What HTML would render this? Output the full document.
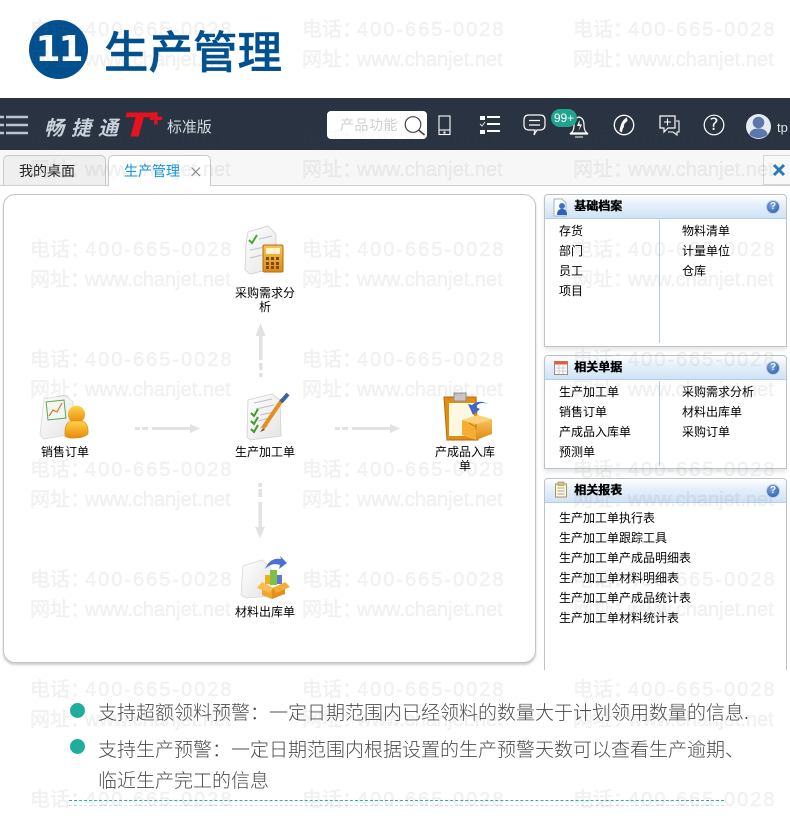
<!DOCTYPE html>
<html lang="zh"><head><meta charset="utf-8"><title>生产管理</title>
<style>
html,body{margin:0;padding:0}
body{width:790px;height:820px;overflow:hidden;background:#fff;position:relative;font-family:"Liberation Sans","WenQuanYi Zen Hei","Noto Sans CJK SC",sans-serif}
.a{position:absolute}
.t{position:absolute;font-size:12px;line-height:20px;color:#000;white-space:nowrap;font-family:"WenQuanYi Zen Hei","Noto Sans CJK SC",sans-serif}
.c{position:absolute;width:64px;text-align:center;font-size:12px;line-height:14px;color:#000;font-family:"WenQuanYi Zen Hei","Noto Sans CJK SC",sans-serif}
.panel{position:absolute;left:544px;width:243px;box-sizing:border-box;border:1px solid #bcc3c8;border-radius:4px 4px 0 0;background:#fff;box-shadow:0 3px 5px rgba(0,0,0,.1)}
.ph{position:absolute;left:0;top:0;right:0;height:23px;background:linear-gradient(#fff 0,#e9f2fb 35%,#cfe2f5 100%);border-bottom:1px solid #b5cfe8;border-radius:4px 4px 0 0}
.ph b{position:absolute;left:29px;top:2px;font-size:12px;line-height:17px;color:#000;text-shadow:.5px 0 #000;font-family:"WenQuanYi Zen Hei","Noto Sans CJK SC",sans-serif}
.q{position:absolute;right:6px;top:5px;width:12px;height:12px;border:1px solid #bcd0ea;border-radius:50%;background:radial-gradient(circle at 40% 35%,#7ea6e0,#1f55aa);color:#fff;font-size:10px;line-height:12px;text-align:center;font-weight:bold}
.dv{position:absolute;left:114px;width:1px;background:#b3cde0}
.w{position:absolute;font-size:20px;line-height:24px;letter-spacing:0;color:rgba(120,120,120,.085);-webkit-text-stroke:.4px rgba(120,120,120,.085);white-space:nowrap;font-family:"Liberation Sans","Noto Sans CJK SC",sans-serif;z-index:50}
.w i{display:inline-block;width:55px;font-style:normal;letter-spacing:0}
.p{letter-spacing:2px}
.d{color:rgba(120,120,120,.045);-webkit-text-stroke:0}
.b{position:absolute;left:98px;font-size:19px;line-height:24px;letter-spacing:0;color:#4c4c4c;white-space:nowrap;font-weight:300;font-family:"Noto Sans CJK SC",sans-serif}
.dot{position:absolute;left:70px;width:15px;height:15px;border-radius:50%;background:#1fae9c}
</style></head><body>

<!-- Title -->
<div class="a" style="left:29px;top:20px;width:59px;height:59px;border-radius:50%;background:#00508f"></div>
<div class="a" style="left:29px;top:20px;width:59px;text-align:center;color:#fff;font-weight:bold;font-size:36px;line-height:59px;letter-spacing:-2px;font-family:'DejaVu Sans',sans-serif">11</div>
<div class="a" style="left:104px;top:20px;font-size:44.5px;line-height:58px;font-weight:500;color:#00508f;-webkit-text-stroke:.4px #00508f;white-space:nowrap;font-family:'Noto Sans CJK SC',sans-serif">生产管理</div>

<!-- Top bar -->
<div class="a" style="left:0;top:98px;width:790px;height:52px;background:#293341"></div>
<svg class="a" style="left:0;top:98px" width="790" height="52" fill="none">
 <g stroke="#b9c4d6" stroke-width="2.500"><path d="M0 19H4M6 19H28M0 27H4M6 27H28M0 35H4M6 35H28"/></g>
 <g stroke="#fff" stroke-width="1.100"><rect x="439" y="18" width="11" height="18.500"/><path d="M439 32H450"/></g><rect x="443.500" y="33.500" width="2" height="2" fill="#fff"/>
 <g fill="#fff"><rect x="480" y="18" width="5" height="4"/><rect x="480" y="32" width="5" height="4"/><rect x="487" y="18" width="13" height="2"/><rect x="487" y="25" width="13" height="2"/><rect x="487" y="32" width="13" height="2"/></g>
 <path d="M480 26L482 28L485 24" stroke="#dfe5ea" stroke-width="1"/>
 <path d="M529 17H540Q545 17 545 22V27Q545 32 540 32H537L534 37L535 32H529Q524 32 524 27V22Q524 17 529 17Z" stroke="#fff" stroke-width="1.200"/><path d="M529 22.500H540M529 27H540" stroke="#fff" stroke-width="1.200"/>
 <path d="M571 35Q574 33 574 27Q574 20 579 19Q584 20 584 27Q584 33 587 35Z" stroke="#fff" stroke-width="1.200"/><path d="M570 36H588" stroke="#fff" stroke-width="1.200"/><path d="M579.500 22L577 28H580L578.500 33L582 26.500H579.500Z" fill="#fff"/><path d="M575 39H583" stroke="#fff" stroke-width="1"/>
 <circle cx="624" cy="27" r="9.700" stroke="#fff" stroke-width="1.300"/><path d="M627 19.500Q621 22 619.500 33L622 34.500Q622.500 30 624 29Q623 26 627.500 23Z" fill="#fff"/>
 <path d="M660 18H675V30H668L664 34V30H660Z" stroke="#fff" stroke-width="1.200"/><path d="M664 24H671M667.500 20.500V27.500" stroke="#fff" stroke-width="1.100"/><path d="M676 23H679V34H677V37L673 34H668" stroke="#fff" stroke-width="1.100"/>
 <circle cx="714" cy="27" r="9.800" stroke="#fff" stroke-width="1.200"/>
 <circle cx="758.500" cy="28.500" r="12.500" fill="#e6ebf3"/><circle cx="758.500" cy="24.500" r="5.800" fill="#5d77ad"/><path d="M749.500 37Q750 30.500 758.500 30.500Q767 30.500 767.500 37Q758.500 43 749.500 37Z" fill="#5d77ad"/>
</svg>
<div class="a" style="left:44px;top:115px;font-size:20px;line-height:24px;font-weight:bold;font-style:italic;color:#c9d2dc;letter-spacing:7px;white-space:nowrap;font-family:'Noto Sans CJK SC',sans-serif">畅捷通</div>
<div class="a" style="left:123px;top:110px;font-size:33px;line-height:30px;font-weight:bold;font-style:italic;color:#e6121f;transform:scaleX(1.4);transform-origin:left top;-webkit-text-stroke:1px #e6121f;font-family:'Liberation Sans',sans-serif">T</div>
<div class="a" style="left:149px;top:107px;font-size:22px;line-height:24px;font-weight:bold;font-style:italic;color:#e6121f;-webkit-text-stroke:1px #e6121f;font-family:'Liberation Sans',sans-serif">+</div>
<div class="a" style="left:167px;top:117px;font-size:15px;line-height:20px;color:#d4dbe3;white-space:nowrap;font-family:'WenQuanYi Zen Hei','Noto Sans CJK SC',sans-serif;letter-spacing:-.1px">标准版</div>
<div class="a" style="left:327px;top:111px;width:100px;height:28px;border-radius:4px;background:#fff"></div>
<div class="a" style="left:340px;top:115px;font-size:14px;line-height:20px;color:#cfcfcf;letter-spacing:.5px;white-space:nowrap;font-family:'WenQuanYi Zen Hei','Noto Sans CJK SC',sans-serif">产品功能</div>
<svg class="a" style="left:400px;top:111px" width="28" height="28" fill="none"><circle cx="13" cy="13.500" r="7.800" stroke="#444" stroke-width="1.200"/><path d="M18.500 19L24.500 24" stroke="#444" stroke-width="1.600"/></svg>
<div class="a" style="left:551px;top:109px;width:26px;height:18px;border-radius:10px;background:#1fa58f;color:#fff;text-align:center;font-size:12px;line-height:18px;white-space:nowrap">99+</div>
<div class="a" style="left:704px;top:114px;width:20px;text-align:center;color:#fff;font-size:17px;line-height:22px;font-family:'DejaVu Sans',sans-serif">?</div>
<div class="a" style="left:777px;top:120px;color:#dfe5ea;font-size:13px;line-height:16px">tp</div>

<!-- Tab bar -->
<div class="a" style="left:0;top:150px;width:790px;height:35px;background:#f7f7f7;border-bottom:1px solid #cfcfcf"></div>
<div class="a" style="left:3px;top:155px;width:103px;height:30px;box-sizing:border-box;background:#efefef;border:1px solid #c9c9c9;border-bottom:0;border-radius:5px 5px 0 0"></div>
<div class="a" style="left:108px;top:155px;width:103px;height:31px;box-sizing:border-box;background:#fff;border:1px solid #c9c9c9;border-bottom:0;border-radius:5px 5px 0 0"></div>
<div class="t" style="left:19px;top:161px;color:#222;font-size:14px;letter-spacing:0">我的桌面</div>
<div class="t" style="left:124px;top:161px;color:#1296db;font-size:14px;letter-spacing:0">生产管理</div>
<svg class="a" style="left:190px;top:166px" width="12" height="12"><path d="M1.500 1.500L10 10M10 1.500L1.500 10" stroke="#8a8a8a" stroke-width="1.200"/></svg>
<div class="a" style="left:763px;top:155px;width:27px;height:30px;box-sizing:border-box;background:#f8f8f8;border:1px solid #d5d5d5;border-right:0"></div>
<svg class="a" style="left:772px;top:163px" width="14" height="14"><path d="M2 2L12 12M12 2L2 12" stroke="#2a78bc" stroke-width="3"/></svg>

<!-- Main flow panel -->
<div class="a" style="left:3px;top:194px;width:533px;height:469px;box-sizing:border-box;background:#fff;border:1px solid #c4c4c4;border-radius:12px;box-shadow:0 2px 2px rgba(100,120,100,.35)"></div>

<!-- flow icons -->
<svg class="a" style="left:0;top:190px" width="540" height="440" fill="none">
 <defs><linearGradient id="pg" x1="0" y1="0" x2="1" y2="1"><stop offset="0" stop-color="#fff"/><stop offset="1" stop-color="#e4e4e4"/></linearGradient>
 <linearGradient id="og" x1="0" y1="0" x2="0" y2="1"><stop offset="0" stop-color="#ffd24a"/><stop offset="1" stop-color="#e88a08"/></linearGradient>
 <linearGradient id="bx" x1="0" y1="0" x2="0" y2="1"><stop offset="0" stop-color="#f8c35a"/><stop offset="1" stop-color="#e08a14"/></linearGradient></defs>

 <g fill="#e2e2e2">
  <path d="M260.500 133L265.500 146H255.500Z"/><rect x="259" y="145" width="3.500" height="25"/><rect x="259" y="173" width="3.500" height="7"/><rect x="259" y="183" width="3.500" height="4"/>
  <rect x="135" y="237" width="5" height="3"/><rect x="142" y="237" width="6" height="3"/><rect x="152" y="237" width="38" height="3"/><path d="M200 238.500L190 234V243Z"/>
  <rect x="335" y="237" width="5" height="3"/><rect x="342" y="237" width="6" height="3"/><rect x="352" y="237" width="38" height="3"/><path d="M400 238.500L390 234V243Z"/>
  <rect x="258.500" y="293" width="3.500" height="4"/><rect x="258.500" y="299" width="3.500" height="8"/><rect x="258.500" y="312" width="3.500" height="26"/><path d="M260 348L255 337H265Z"/>
 </g>

 <path d="M246 54L248 42L268 36L276 44V78L250 84L245 80Z" fill="url(#pg)" stroke="#cfcfcf" stroke-width=".8"/>
 <path d="M249 50L252 53L257 45" stroke="#48a838" stroke-width="2"/>
 <path d="M259 49L272 46M250 60L270 56M250 68L262 65" stroke="#c4cbd2" stroke-width="1.200"/>
 <rect x="263" y="55" width="20" height="27" rx="1.500" fill="url(#bx)" stroke="#b06d08"/><rect x="266" y="58" width="14" height="6" fill="#fff3c8"/>
 <g fill="#7a4a05"><rect x="266" y="67" width="3" height="3"/><rect x="271" y="67" width="3" height="3"/><rect x="276" y="67" width="3" height="3"/><rect x="266" y="72" width="3" height="3"/><rect x="271" y="72" width="3" height="3"/><rect x="276" y="72" width="3" height="3"/><rect x="266" y="76" width="3" height="3"/><rect x="271" y="76" width="3" height="3"/><rect x="276" y="76" width="3" height="3"/></g>

 <path d="M44 209L65 205L73 212V244L44 249L40 245Z" fill="url(#pg)" stroke="#d8d8d8" stroke-width=".8"/>
 <rect x="47" y="211" width="18" height="18" fill="#f2f7ee" stroke="#5ca858" transform="rotate(-6 56 220)"/>
 <path d="M49 226L53 220L57 222L62 213" stroke="#e0703a" stroke-width="1.200"/>
 <ellipse cx="76.500" cy="224.500" rx="8.500" ry="8.800" fill="url(#og)"/>
 <path d="M65 246Q64 233 71 231H82Q89 233 88 244Q83 248 76 248Q69 249 65 246Z" fill="url(#og)" stroke="#d98a0c" stroke-width=".6"/>

 <path d="M248 210L272 204L280 210L281 246L250 250L247 247Z" fill="url(#pg)" stroke="#d0d0d0" stroke-width=".8"/>
 <path d="M254 213L272 209M256 219L274 215M260 225L274 222M258 231L270 228M260 238L268 236" stroke="#b9c0c6" stroke-width="1"/>
 <path d="M251 223L254 226L258 219M251 231L254 234L258 227M251 239L254 242L258 235" stroke="#3f9c2c" stroke-width="2"/>
 <path d="M263 238L282 210" stroke="#e58f22" stroke-width="4"/><path d="M281 212L288 204" stroke="#3a62ad" stroke-width="4"/><path d="M263 238L260 242L265 240Z" fill="#8a5a18"/>

 <path d="M444 207H476L478 250H447Z" fill="#e08f12" stroke="#b26a08"/>
 <rect x="449" y="213" width="25" height="33" fill="#fff8e0"/>
 <rect x="454" y="203" width="12" height="8" fill="#c8c8c8" stroke="#8f8f8f"/>
 <path d="M476 234L492 229V244L476 250Z" fill="url(#bx)"/><path d="M462 230L476 234V250L462 245Z" fill="#f5ae33"/><path d="M462 230L478 225L492 229L476 234Z" fill="#fbd27c"/>
 <path d="M469 233L476 237M476 234V240" stroke="#b97a10" stroke-width=".8"/>
 <path d="M488 214Q479 211 476 217L480 219L473 225L468 214L472 215Q479 209 488 214Z" fill="#3f68c8"/>

 <path d="M243 376L262 370L271 378V406L246 408L241 405Z" fill="url(#pg)" stroke="#d8d8d8" stroke-width=".8"/>
 <rect x="270" y="380" width="7" height="15" fill="#7dc243"/><rect x="265" y="385" width="5" height="9" fill="#ecb11e"/><rect x="277" y="385" width="5" height="9" fill="#5c79cf"/>
 <path d="M262 393L272 398V409L262 405Z" fill="#f0a52b"/><path d="M272 398L285 393V404L272 409Z" fill="#e2901b"/>
 <path d="M262 392L257 398L270 403L273 398Z" fill="#f7bd4f"/><path d="M285 392L290 397L276 403L273 398Z" fill="#f3ae38"/>
 <path d="M265 379Q270 367 281 369L280 366L287 373L279 379L280 375Q272 372 265 379Z" fill="#4a70d4"/>
</svg>

<div class="c" style="left:233px;top:286px">采购需求分析</div>
<div class="c" style="left:33px;top:445px">销售订单</div>
<div class="c" style="left:233px;top:445px">生产加工单</div>
<div class="c" style="left:433px;top:445px">产成品入库单</div>
<div class="c" style="left:233px;top:605px">材料出库单</div>

<!-- Right panels -->
<div class="panel" style="top:194px;height:153px"><div class="ph"><b>基础档案</b><span class="q">?</span></div><div class="dv" style="top:25px;height:123px"></div></div>
<div class="panel" style="top:355px;height:114px"><div class="ph"><b>相关单据</b><span class="q">?</span></div><div class="dv" style="top:25px;height:85px"></div></div>
<div class="panel" style="top:478px;height:193px;box-shadow:none;border-bottom:0"><div class="ph"><b>相关报表</b><span class="q">?</span></div></div>
<div class="a" style="left:787px;top:194px;width:3px;height:476px;background:#fff"></div>
<svg class="a" style="left:552px;top:198px" width="22" height="300" fill="none">
 <path d="M2 1H10L14 5V18H2Z" fill="#fff" stroke="#aab2ba"/><circle cx="10" cy="8" r="3" fill="#3b70c4"/><path d="M5 17Q5 11 10 11Q15 11 15 17Z" fill="#2b62b8"/>
 <rect x="2.500" y="163.500" width="13" height="13" fill="#fff" stroke="#a08a78"/><rect x="2.500" y="163.500" width="13" height="3" fill="#e0603a"/><path d="M2.500 170H15.500M2.500 173H15.500M7 167V176M11 167V176" stroke="#b9c4d0" stroke-width=".8"/>
 <rect x="3.500" y="286" width="11" height="13" fill="#fff7dc" stroke="#a89660"/><rect x="6" y="284" width="6" height="3.500" fill="#d8c27a" stroke="#97854e" stroke-width=".6"/><path d="M5.500 290H12.500M5.500 293H12.500M5.500 296H12.500" stroke="#8a8a8a" stroke-width=".8"/>
</svg>

<div class="t" style="left:559px;top:221px">存货</div>
<div class="t" style="left:559px;top:241px">部门</div>
<div class="t" style="left:559px;top:261px">员工</div>
<div class="t" style="left:559px;top:281px">项目</div>
<div class="t" style="left:682px;top:221px">物料清单</div>
<div class="t" style="left:682px;top:241px">计量单位</div>
<div class="t" style="left:682px;top:261px">仓库</div>

<div class="t" style="left:559px;top:382px">生产加工单</div>
<div class="t" style="left:559px;top:402px">销售订单</div>
<div class="t" style="left:559px;top:422px">产成品入库单</div>
<div class="t" style="left:559px;top:442px">预测单</div>
<div class="t" style="left:682px;top:382px">采购需求分析</div>
<div class="t" style="left:682px;top:402px">材料出库单</div>
<div class="t" style="left:682px;top:422px">采购订单</div>

<div class="t" style="left:559px;top:508px">生产加工单执行表</div>
<div class="t" style="left:559px;top:528px">生产加工单跟踪工具</div>
<div class="t" style="left:559px;top:548px">生产加工单产成品明细表</div>
<div class="t" style="left:559px;top:568px">生产加工单材料明细表</div>
<div class="t" style="left:559px;top:588px">生产加工单产成品统计表</div>
<div class="t" style="left:559px;top:608px">生产加工单材料统计表</div>

<!-- bottom white cover -->
<div class="a" style="left:537px;top:670px;width:253px;height:150px;background:#fff"></div>

<!-- Bullets -->
<div class="dot" style="left:70px;top:703px"></div>
<div class="dot" style="left:70px;top:739px"></div>
<div class="b" style="top:700px">支持超额领料预警：一定日期范围内已经领料的数量大于计划领用数量的信息.</div>
<div class="b" style="top:737px">支持生产预警：一定日期范围内根据设置的生产预警天数可以查看生产逾期、</div>
<div class="b" style="top:768px">临近生产完工的信息</div>
<div class="a" style="left:69px;top:800px;width:655px;height:0;border-top:1px dashed #39ad9d"></div>
<div class="a" style="left:69px;top:805px;width:655px;height:0;border-top:1px dashed #bfe6e0"></div>

<!-- Watermarks -->
<div class="w p" style="left:30px;top:18px"><i>电话：</i>400-665-0028</div><div class="w p" style="left:302px;top:18px"><i>电话：</i>400-665-0028</div><div class="w p" style="left:573px;top:18px"><i>电话：</i>400-665-0028</div>
<div class="w" style="left:30px;top:48px"><i>网址：</i>www.chanjet.net</div><div class="w" style="left:302px;top:48px"><i>网址：</i>www.chanjet.net</div><div class="w" style="left:573px;top:48px"><i>网址：</i>www.chanjet.net</div>
<div class="w p d" style="left:30px;top:128px"><i>电话：</i>400-665-0028</div><div class="w p d" style="left:302px;top:128px"><i>电话：</i>400-665-0028</div><div class="w p d" style="left:573px;top:128px"><i>电话：</i>400-665-0028</div>
<div class="w" style="left:30px;top:158px"><i>网址：</i>www.chanjet.net</div><div class="w" style="left:302px;top:158px"><i>网址：</i>www.chanjet.net</div><div class="w" style="left:573px;top:158px"><i>网址：</i>www.chanjet.net</div>
<div class="w p" style="left:30px;top:238px"><i>电话：</i>400-665-0028</div><div class="w p" style="left:302px;top:238px"><i>电话：</i>400-665-0028</div><div class="w p" style="left:573px;top:238px"><i>电话：</i>400-665-0028</div>
<div class="w" style="left:30px;top:268px"><i>网址：</i>www.chanjet.net</div><div class="w" style="left:302px;top:268px"><i>网址：</i>www.chanjet.net</div><div class="w" style="left:573px;top:268px"><i>网址：</i>www.chanjet.net</div>
<div class="w p" style="left:30px;top:348px"><i>电话：</i>400-665-0028</div><div class="w p" style="left:302px;top:348px"><i>电话：</i>400-665-0028</div><div class="w p" style="left:573px;top:348px"><i>电话：</i>400-665-0028</div>
<div class="w" style="left:30px;top:378px"><i>网址：</i>www.chanjet.net</div><div class="w" style="left:302px;top:378px"><i>网址：</i>www.chanjet.net</div><div class="w" style="left:573px;top:378px"><i>网址：</i>www.chanjet.net</div>
<div class="w p" style="left:30px;top:458px"><i>电话：</i>400-665-0028</div><div class="w p" style="left:302px;top:458px"><i>电话：</i>400-665-0028</div><div class="w p" style="left:573px;top:458px"><i>电话：</i>400-665-0028</div>
<div class="w" style="left:30px;top:488px"><i>网址：</i>www.chanjet.net</div><div class="w" style="left:302px;top:488px"><i>网址：</i>www.chanjet.net</div><div class="w" style="left:573px;top:488px"><i>网址：</i>www.chanjet.net</div>
<div class="w p" style="left:30px;top:568px"><i>电话：</i>400-665-0028</div><div class="w p" style="left:302px;top:568px"><i>电话：</i>400-665-0028</div><div class="w p" style="left:573px;top:568px"><i>电话：</i>400-665-0028</div>
<div class="w" style="left:30px;top:598px"><i>网址：</i>www.chanjet.net</div><div class="w" style="left:302px;top:598px"><i>网址：</i>www.chanjet.net</div><div class="w" style="left:573px;top:598px"><i>网址：</i>www.chanjet.net</div>
<div class="w p" style="left:30px;top:678px"><i>电话：</i>400-665-0028</div><div class="w p" style="left:302px;top:678px"><i>电话：</i>400-665-0028</div><div class="w p" style="left:573px;top:678px"><i>电话：</i>400-665-0028</div>
<div class="w" style="left:30px;top:708px"><i>网址：</i>www.chanjet.net</div><div class="w" style="left:302px;top:708px"><i>网址：</i>www.chanjet.net</div><div class="w" style="left:573px;top:708px"><i>网址：</i>www.chanjet.net</div>
<div class="w p" style="left:30px;top:788px"><i>电话：</i>400-665-0028</div><div class="w p" style="left:302px;top:788px"><i>电话：</i>400-665-0028</div><div class="w p" style="left:573px;top:788px"><i>电话：</i>400-665-0028</div>
</body></html>
